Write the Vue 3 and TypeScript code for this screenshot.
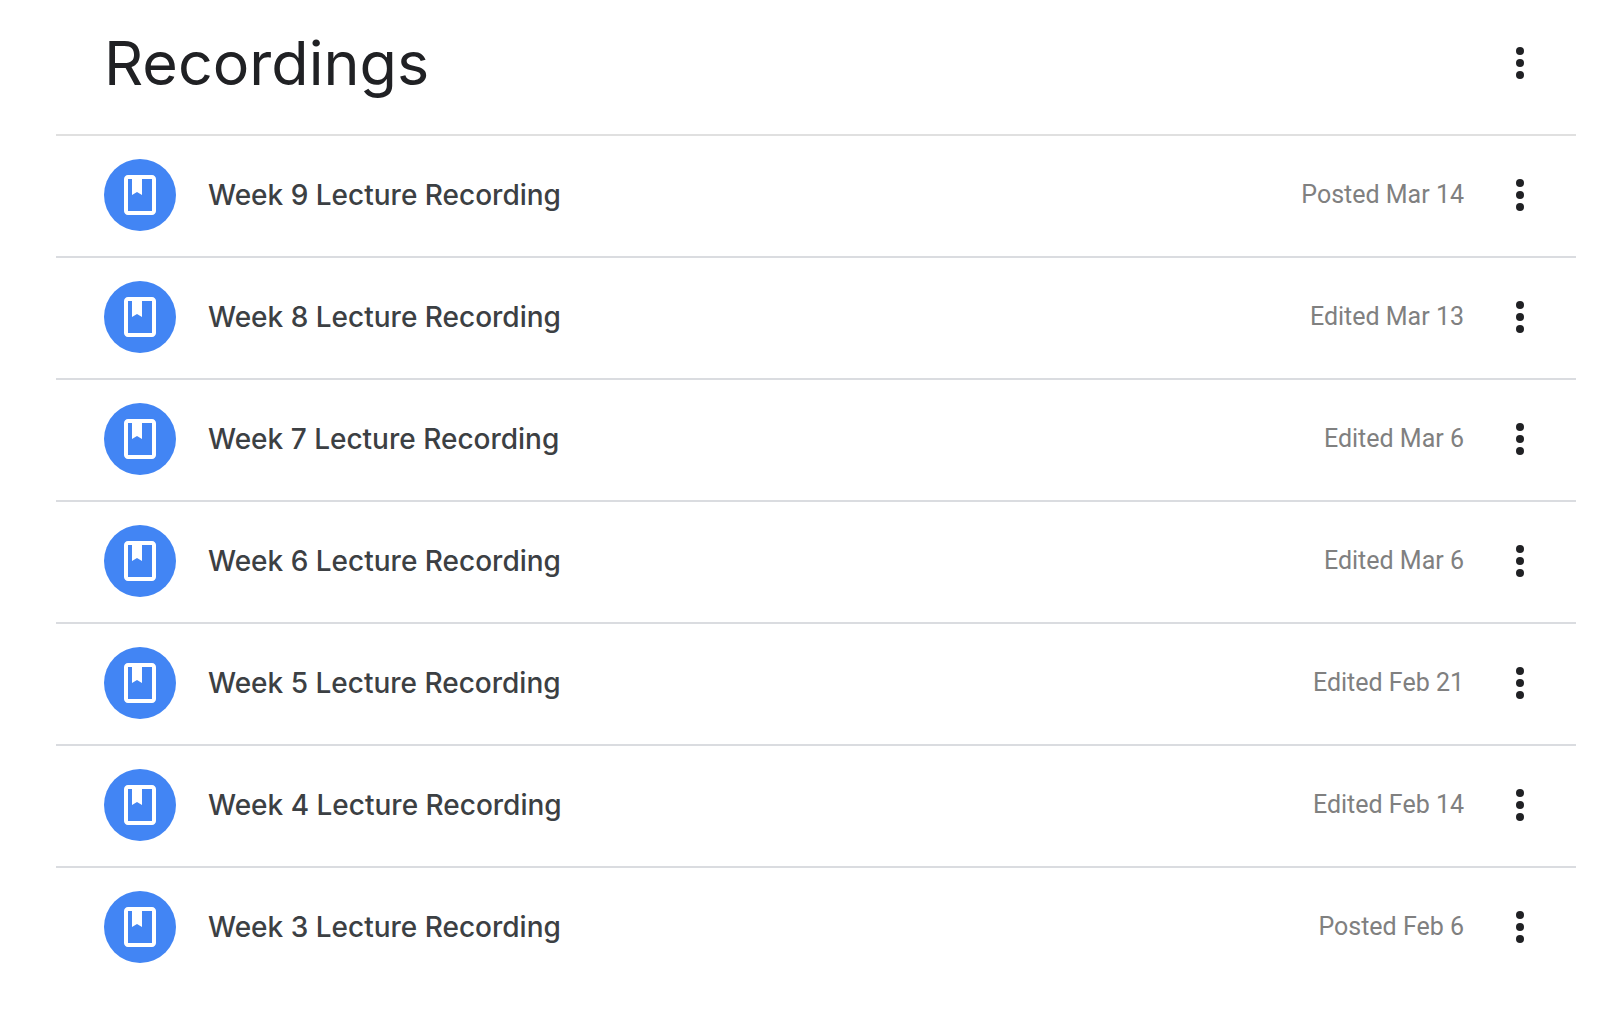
<script setup lang="ts">
interface Recording {
  week: number
  status: string
}

const recordings: Recording[] = [
  { week: 9, status: 'Posted Mar 14' },
  { week: 8, status: 'Edited Mar 13' },
  { week: 7, status: 'Edited Mar 6' },
  { week: 6, status: 'Edited Mar 6' },
  { week: 5, status: 'Edited Feb 21' },
  { week: 4, status: 'Edited Feb 14' },
  { week: 3, status: 'Posted Feb 6' },
]
</script>

<template>
  <main class="topic">
    <header class="topic-header">
      <h1 class="topic-title">Recordings</h1>
      <button class="more" type="button" aria-label="Topic options">
        <svg class="more-icon" viewBox="0 0 24 24" aria-hidden="true">
          <circle cx="12" cy="6" r="2" />
          <circle cx="12" cy="12" r="2" />
          <circle cx="12" cy="18" r="2" />
        </svg>
      </button>
    </header>
    <ul class="list">
      <li v-for="item in recordings" :key="item.week" class="row">
        <span class="badge">
          <svg class="badge-icon" viewBox="0 0 24 24" aria-hidden="true">
            <path
              d="M18 2H6c-1.1 0-2 .9-2 2v16c0 1.1.9 2 2 2h12c1.1 0 2-.9 2-2V4c0-1.1-.9-2-2-2zm0 18H6V4h2v8l2.5-1.5L13 12V4h5v16z"
            />
          </svg>
        </span>
        <h2 class="name">Week {{ item.week }} Lecture Recording</h2>
        <span class="status">{{ item.status }}</span>
        <button class="more" type="button" :aria-label="`Options for week ${item.week}`">
          <svg class="more-icon" viewBox="0 0 24 24" aria-hidden="true">
            <circle cx="12" cy="6" r="2" />
            <circle cx="12" cy="12" r="2" />
            <circle cx="12" cy="18" r="2" />
          </svg>
        </button>
      </li>
    </ul>
  </main>
</template>

<style>
body {
  margin: 0;
  background: #fff;
}
</style>

<style scoped>
.topic {
  margin: 0 40px 0 56px;
  font-family: Inter, "Open Sans", sans-serif;
}

.topic-header {
  display: flex;
  align-items: center;
  justify-content: space-between;
  padding: 23px 32px 31px 48px;
  border-bottom: 2px solid #e0e0e0;
}

.topic-title {
  margin: 0;
  font-size: 61px;
  line-height: 80px;
  font-weight: 400;
  color: #202124;
}

.more {
  display: flex;
  flex: none;
  padding: 0;
  border: 0;
  background: none;
  cursor: pointer;
}

.more-icon {
  width: 48px;
  height: 48px;
  fill: #202124;
}

.list {
  margin: 0;
  padding: 0;
  list-style: none;
}

.row {
  display: flex;
  align-items: center;
  padding: 23px 32px 25px 48px;
}

.row + .row {
  border-top: 2px solid #dadce0;
}

.badge {
  display: flex;
  flex: none;
  align-items: center;
  justify-content: center;
  width: 72px;
  height: 72px;
  border-radius: 50%;
  background: #4285f4;
}

.badge-icon {
  width: 48px;
  height: 48px;
  fill: #fff;
}

.name {
  flex: 1;
  margin: 0 32px;
  font-size: 28px;
  line-height: 40px;
  font-weight: 500;
  color: #3c4043;
}

.status {
  margin-right: 32px;
  font-family: Roboto, sans-serif;
  font-size: 25px;
  line-height: 40px;
  color: #808080;
}
</style>
